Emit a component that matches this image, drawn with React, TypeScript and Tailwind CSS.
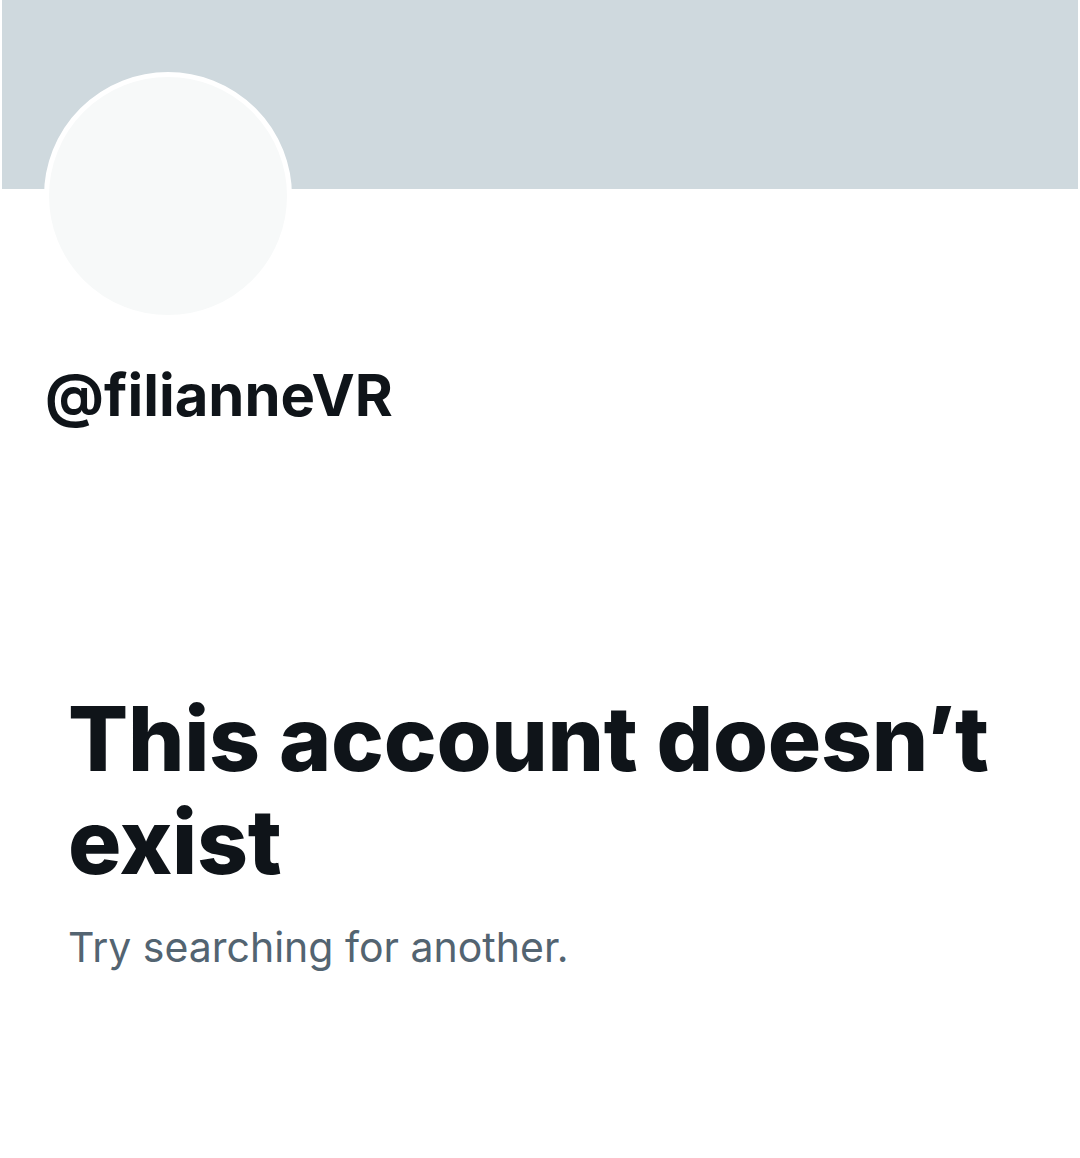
export default function App() {
  return (
    <div className="h-[1158px] w-[1080px] bg-white font-['Inter',sans-serif] text-[#0F1419]">
      <div className="mx-[2px] h-[189px] bg-[#CFD9DE]" />
      <div className="ml-[44px] -mt-[117px] h-[248px] w-[248px] rounded-full border-[5px] border-white bg-[#F7F9F9]" />
      <div className="ml-[45px] mt-[43px] text-[58px] font-bold leading-[64px]">
        @filianneVR
      </div>
      <div className="ml-[68px] mr-[60px] mt-[260px]">
        <h1 className="text-[89px] font-extrabold leading-[103px] tracking-[-0.3px]">
          This account doesn’t exist
        </h1>
        <p className="mt-[26px] text-[41px] leading-[56px] text-[#536471]">
          Try searching for another.
        </p>
      </div>
    </div>
  );
}
